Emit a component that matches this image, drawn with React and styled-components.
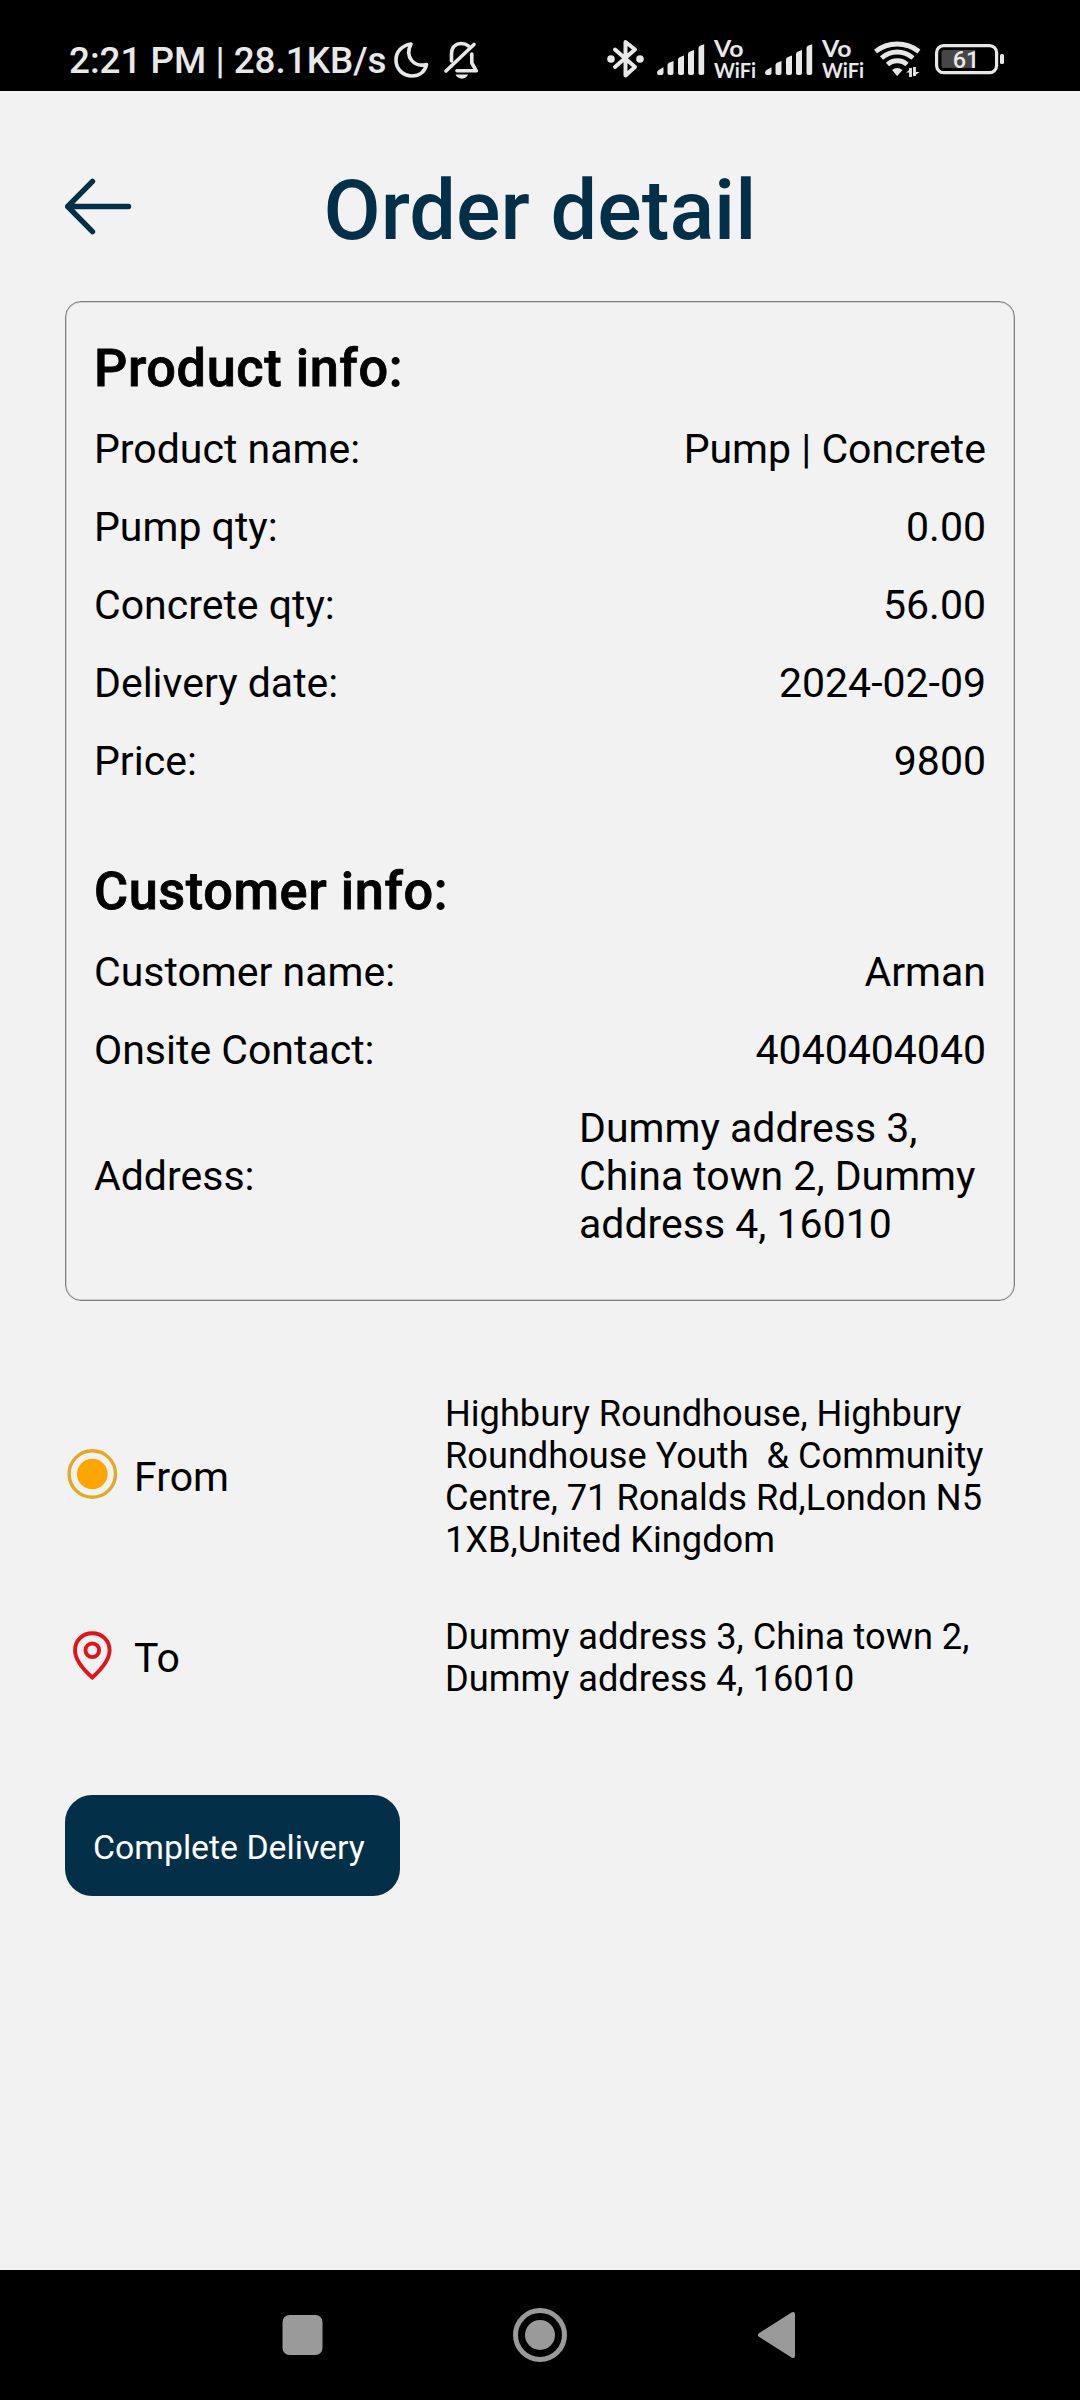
/**
*
* Order detail
*
*/

import React from 'react';
import styled, { createGlobalStyle } from 'styled-components';

const GlobalStyle = createGlobalStyle`
  body {
    margin: 0;
    background: #f2f2f2;
  }
  * {
    box-sizing: border-box;
  }
`;

const Screen = styled.div`
  display: flex;
  flex-direction: column;
  width: 1080px;
  height: 2400px;
  background: #f2f2f2;
  color: #000;
  font-family: Roboto, sans-serif;
`;

const StatusBar = styled.div`
  display: flex;
  justify-content: space-between;
  flex: none;
  height: 91px;
  padding: 36px 76px 0 69px;
  background: #000;
  color: #e8e8e8;
`;

const StatusGroup = styled.div`
  display: flex;
  align-items: flex-start;

  svg {
    display: block;
    flex: none;
    overflow: visible;
  }
`;

const Clock = styled.span`
  width: 325px;
  font-size: 36.8px;
  font-weight: 500;
  line-height: 49px;
  white-space: nowrap;
`;

const Spacer = styled.span`
  flex: none;
  width: ${props => props.$size}px;
`;

const Content = styled.main`
  flex: 1;
  padding: 71px 65px 0;
`;

const Header = styled.header`
  display: grid;
  grid-template-columns: 68px 1fr 68px;
  height: 139px;

  svg {
    display: block;
    margin-top: 14px;
  }
`;

const Title = styled.h1`
  margin: 0;
  color: #033048;
  font-size: 83px;
  font-weight: 500;
  line-height: 98px;
  text-align: center;
`;

const Card = styled.section`
  height: 1000px;
  padding: 35px 28px 0;
  border: 1px solid #808080;
  border-radius: 16px;
  box-shadow: inset 0 0 0 1px #cfcfcf;
`;

const CardTitle = styled.h2`
  margin: 0 0 26px;
  font-size: 52.25px;
  font-weight: 500;
  letter-spacing: 0.6px;
  line-height: 63px;
  height: 62px;
  -webkit-text-stroke: 0.8px #000;
`;

const Rows = styled.div`
  display: flex;
  flex-direction: column;
  gap: 30px;
  margin-bottom: 75px;
`;

const Row = styled.div`
  display: flex;
  align-items: center;
  justify-content: space-between;
  font-size: 41px;
  line-height: 48px;
`;

const Value = styled.span`
  max-width: 407px;
`;

const Stops = styled.section`
  display: flex;
  flex-direction: column;
  gap: 55px;
  margin-top: 92px;
`;

const Stop = styled.div`
  display: flex;
  align-items: center;

  svg {
    display: block;
    flex: none;
  }
`;

const StopLabel = styled.span`
  width: 311px;
  padding-left: 14px;
  font-size: 41px;
  line-height: 48px;
`;

const StopAddress = styled.span`
  width: 550px;
  margin-left: 14px;
  font-size: 36.2px;
  line-height: 42px;
  white-space: pre-wrap;
`;

const Button = styled.button`
  display: block;
  width: 335px;
  height: 101px;
  margin-top: 95px;
  padding: 4px 28px 0;
  border: 0;
  border-radius: 27px;
  background: #033048;
  color: #fff;
  font-family: inherit;
  font-size: 33.8px;
  text-align: left;
  white-space: nowrap;
`;

const NavBar = styled.nav`
  display: flex;
  align-items: center;
  justify-content: space-between;
  flex: none;
  height: 130px;
  padding: 0 283px 0 282px;
  background: #000;

  svg {
    display: block;
  }
`;

const product = [
  ['Product name:', 'Pump | Concrete'],
  ['Pump qty:', '0.00'],
  ['Concrete qty:', '56.00'],
  ['Delivery date:', '2024-02-09'],
  ['Price:', '9800'],
];

const customer = [
  ['Customer name:', 'Arman'],
  ['Onsite Contact:', '4040404040'],
  ['Address:', 'Dummy address 3, China town 2, Dummy address 4, 16010'],
];

const MoonIcon = () => (
  <svg width="35" height="48" viewBox="0 0 35 48" fill="none" stroke="#e8e8e8" strokeWidth="3.6" strokeLinejoin="round">
    <path d="M17 8 C7.5 9.5 2 16 2 24 C2 33 9 40 18 40 C25.5 40 31 35.5 32.5 28.5 C21 31.5 10 22 17 8 Z" />
  </svg>
);

const BellOffIcon = () => (
  <svg width="35" height="48" viewBox="0 0 35 48" fill="none" stroke="#e8e8e8" strokeWidth="3.6" strokeLinecap="round" strokeLinejoin="round">
    <path d="M7.5 25 V18 C7.5 11.5 11.5 7.5 17.5 7.5 C20.5 7.5 22.5 8.3 24.3 9.8" />
    <path d="M2 35 L30 8.5" />
    <path d="M27.8 18 V27 L32.3 34.8 H13" />
    <path d="M11.5 38.5 H24 C22.5 44 13.5 44 11.5 38.5 Z" fill="#e8e8e8" stroke="none" />
  </svg>
);

const BluetoothIcon = () => (
  <svg width="37" height="48" viewBox="0 0 37 48" fill="none" stroke="#e8e8e8" strokeWidth="4" strokeLinecap="round" strokeLinejoin="round">
    <path d="M8 13.5 L28 31 L18.5 39.5 V6 L28 13.5 L8 31" />
    <circle cx="4" cy="23" r="3.8" fill="#e8e8e8" stroke="none" />
    <circle cx="33" cy="23" r="3.8" fill="#e8e8e8" stroke="none" />
  </svg>
);

const SignalIcon = () => (
  <svg width="48" height="48" viewBox="0 0 48 48" fill="#e8e8e8">
    <path d="M0 37 Q0 34.5 2 33.8 L6.5 31.3 V37 Q6.5 39 4.5 39 H2 Q0 39 0 37 Z" />
    <path d="M10.5 29 Q10.5 27.5 12 26.8 L16.5 25 V37 Q16.5 39 14.5 39 H12.5 Q10.5 39 10.5 37 Z" />
    <path d="M21 23.5 Q21 22 22.5 21.2 L27 19.5 V37 Q27 39 25 39 H23 Q21 39 21 37 Z" />
    <path d="M31 18 Q31 16.5 32.5 15.8 L37 14 V37 Q37 39 35 39 H33 Q31 39 31 37 Z" />
    <path d="M41.5 12 Q41.5 10.5 43 9.8 L47.2 8.3 V37 Q47.2 39 45.2 39 H43.5 Q41.5 39 41.5 37 Z" />
  </svg>
);

const VoWifiIcon = () => (
  <svg width="42" height="48" viewBox="0 0 42 48" fill="#e8e8e8" fontFamily="Lato, sans-serif" fontWeight="700">
    <text x="0" y="20.8" fontSize="22.5" textLength="29.5" lengthAdjust="spacingAndGlyphs">Vo</text>
    <text x="0" y="42" fontSize="21" textLength="42" lengthAdjust="spacingAndGlyphs">WiFi</text>
  </svg>
);

const WifiIcon = () => (
  <svg width="47" height="48" viewBox="0 0 47 48" fill="none" stroke="#e8e8e8" strokeWidth="4.8">
    <path d="M1.5 15.5 C14 5.5 32 5.5 45 15.5" />
    <path d="M7.5 22 C17 14 29.5 14 39 22" />
    <path d="M13.5 28.5 C19 23.5 27.5 23.5 33 28.5" />
    <path d="M18 34 Q23 30 28.5 34 L23.2 40 Z" fill="#e8e8e8" stroke="none" />
    <path d="M36.5 32 V41 M40.5 31 V40" strokeWidth="2.8" />
    <path d="M32 36.5 L37.5 32.5 V36.5 Z M39.5 36 H45.5 L39.5 40.5 Z" fill="#e8e8e8" stroke="none" />
  </svg>
);

const BatteryIcon = () => (
  <svg width="69" height="48" viewBox="0 0 69 48">
    <rect x="1.6" y="9.6" width="60" height="27" rx="7" fill="none" stroke="#e8e8e8" strokeWidth="3.2" />
    <path d="M9 14 H40 V32 H9 Q6.5 32 6.5 29.5 V16.5 Q6.5 14 9 14 Z" fill="#464646" />
    <rect x="65" y="18" width="4" height="10" rx="1.5" fill="#e8e8e8" />
    <text x="31" y="31.8" fontSize="23.5" fontWeight="500" fill="#e8e8e8" textAnchor="middle">61</text>
  </svg>
);

const BackIcon = () => (
  <svg width="68" height="60" viewBox="0 0 68 60" fill="none" stroke="#033048" strokeWidth="5.4" strokeLinecap="round" strokeLinejoin="round">
    <path d="M27.5 5.3 L2.7 30.5 L27.5 55.7 M2.7 30.5 H63.5" />
  </svg>
);

const FromIcon = () => (
  <svg width="55" height="56" viewBox="0 0 55 56">
    <circle cx="27.3" cy="25" r="23.2" fill="none" stroke="#e5a823" strokeWidth="3.4" />
    <circle cx="27.3" cy="25" r="15.3" fill="#ffa500" />
  </svg>
);

const ToIcon = () => (
  <svg width="55" height="56" viewBox="0 0 55 56" fill="none" stroke="#e0151b" strokeWidth="3.9">
    <path d="M27.3 47.5 C20 41 10 30 10 20.2 C10 10.5 17.5 3.2 27.3 3.2 C37 3.2 44.6 10.5 44.6 20.2 C44.6 30 34.5 41 27.3 47.5 Z" />
    <circle cx="27.3" cy="20.3" r="6.8" />
  </svg>
);

const InfoRows = ({ items }) => (
  <Rows>
    {items.map(([label, value]) => (
      <Row key={label}>
        <span>{label}</span>
        <Value>{value}</Value>
      </Row>
    ))}
  </Rows>
);

const App = () => {
  return (
    <Screen>
      <GlobalStyle />
      <StatusBar>
        <StatusGroup>
          <Clock>2:21 PM | 28.1KB/s</Clock>
          <MoonIcon />
          <Spacer $size={15} />
          <BellOffIcon />
        </StatusGroup>
        <StatusGroup>
          <BluetoothIcon />
          <Spacer $size={13} />
          <SignalIcon />
          <Spacer $size={9} />
          <VoWifiIcon />
          <Spacer $size={9} />
          <SignalIcon />
          <Spacer $size={9} />
          <VoWifiIcon />
          <Spacer $size={10} />
          <WifiIcon />
          <Spacer $size={14} />
          <BatteryIcon />
        </StatusGroup>
      </StatusBar>
      <Content>
        <Header>
          <BackIcon />
          <Title>Order detail</Title>
        </Header>
        <Card>
          <CardTitle>Product info:</CardTitle>
          <InfoRows items={product} />
          <CardTitle>Customer info:</CardTitle>
          <InfoRows items={customer} />
        </Card>
        <Stops>
          <Stop>
            <FromIcon />
            <StopLabel>From</StopLabel>
            <StopAddress>{'Highbury Roundhouse, Highbury Roundhouse Youth  & Community Centre, 71 Ronalds Rd,London N5 1XB,United Kingdom'}</StopAddress>
          </Stop>
          <Stop>
            <ToIcon />
            <StopLabel>To</StopLabel>
            <StopAddress>Dummy address 3, China town 2, Dummy address 4, 16010</StopAddress>
          </Stop>
        </Stops>
        <Button>Complete Delivery</Button>
      </Content>
      <NavBar>
        <svg width="41" height="56" viewBox="0 0 41 56">
          <rect x="0.5" y="8" width="40" height="40" rx="7" fill="#9a9a9a" />
        </svg>
        <svg width="56" height="56" viewBox="0 0 56 56">
          <circle cx="28" cy="28" r="24.5" fill="none" stroke="#9a9a9a" strokeWidth="5" />
          <circle cx="28" cy="28" r="15" fill="#9a9a9a" />
        </svg>
        <svg width="41" height="56" viewBox="0 0 41 56">
          <path d="M4 28 L37 7 V49 Z" fill="#9a9a9a" stroke="#9a9a9a" strokeWidth="4" strokeLinejoin="round" />
        </svg>
      </NavBar>
    </Screen>
  );
}

export default App;
